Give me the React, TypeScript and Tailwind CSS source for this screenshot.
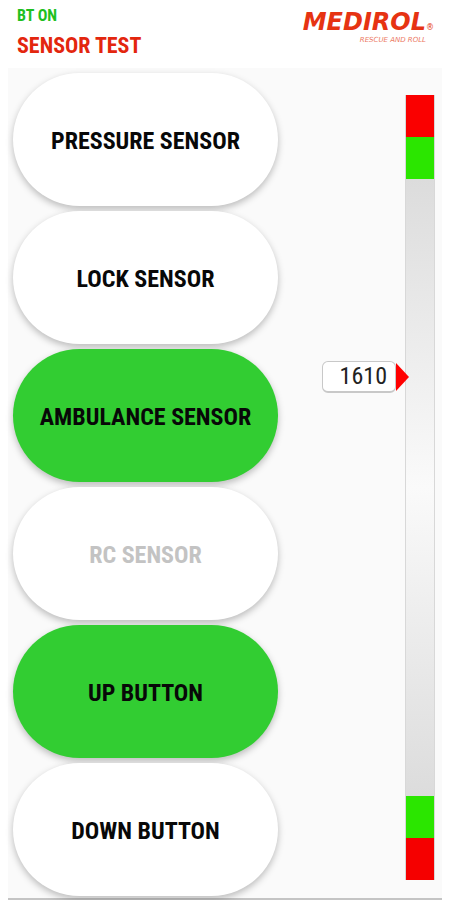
import React from "react";

type Sensor = { label: string; active?: boolean; disabled?: boolean };

const sensors: Sensor[] = [
  { label: "PRESSURE SENSOR" },
  { label: "LOCK SENSOR" },
  { label: "AMBULANCE SENSOR", active: true },
  { label: "RC SENSOR", disabled: true },
  { label: "UP BUTTON", active: true },
  { label: "DOWN BUTTON" },
];

function SensorButton({ label, active, disabled }: Sensor) {
  return (
    <button
      type="button"
      disabled={disabled}
      className={`h-[133px] w-full rounded-full pt-0.5 text-2xl font-bold whitespace-nowrap shadow-[0_3px_7px_rgba(0,0,0,0.25)] ${
        active ? "bg-[#32cd32]" : "bg-white"
      } ${disabled ? "text-[#c3c3c3]" : "text-[#080808]"}`}
    >
      {label}
    </button>
  );
}

function Logo() {
  return (
    <div className="flex flex-col items-end pt-2 font-['DejaVu_Sans',sans-serif] italic">
      <div className="flex items-end text-[#e63312]">
        <span className="text-2xl leading-7 font-bold">MEDIROL</span>
        <span className="text-[8px] leading-4">®</span>
      </div>
      <span className="pr-2 text-[7px] leading-2 text-[#ec7a64]">RESCUE AND ROLL</span>
    </div>
  );
}

function Gauge({ value }: { value: number }) {
  return (
    <div className="relative mt-[27px] mr-[7px] mb-[18px] flex w-[30px] flex-col border-x border-[#d8d8d8]">
      <div className="h-[42px] bg-[#fa0000]" />
      <div className="h-[42px] bg-[#2be600]" />
      <div className="flex-1 bg-linear-to-b from-[#dcdcdc] via-[#fafafa] to-[#dcdcdc]" />
      <div className="h-[42px] bg-[#2be600]" />
      <div className="h-[42px] bg-[#f50000]" />
      <div className="absolute top-[266px] right-[25px] flex items-center">
        <output className="h-8 w-[74px] rounded-md border border-b-2 border-[#c8c8c8] bg-white pr-2 text-right text-2xl leading-7 text-[#222]">
          {value}
        </output>
        <svg width="13" height="28" viewBox="0 0 13 28" aria-hidden="true">
          <path d="M0 0 L13 14 L0 28 Z" fill="#ff0000" />
        </svg>
      </div>
    </div>
  );
}

export default function App() {
  return (
    <div className="flex min-h-screen flex-col bg-white px-2 font-['Roboto_Condensed','Liberation_Sans_Narrow',Roboto,sans-serif]">
      <header className="flex h-[68px] justify-between pr-2 pl-[9px]">
        <div className="pt-2 font-bold">
          <p className="text-base leading-4 text-[#1fc01f]">BT ON</p>
          <h1 className="pt-3 text-[22px] leading-5 text-[#e3260e]">SENSOR TEST</h1>
        </div>
        <Logo />
      </header>
      <main className="flex flex-1 justify-between border-b-2 border-[#c4c4c4] bg-[#fafafa]">
        <div className="flex w-[270px] flex-col gap-[5px] pt-[5px] pb-[2px] pl-[5px]">
          {sensors.map((sensor) => (
            <SensorButton key={sensor.label} {...sensor} />
          ))}
        </div>
        <Gauge value={1610} />
      </main>
    </div>
  );
}
